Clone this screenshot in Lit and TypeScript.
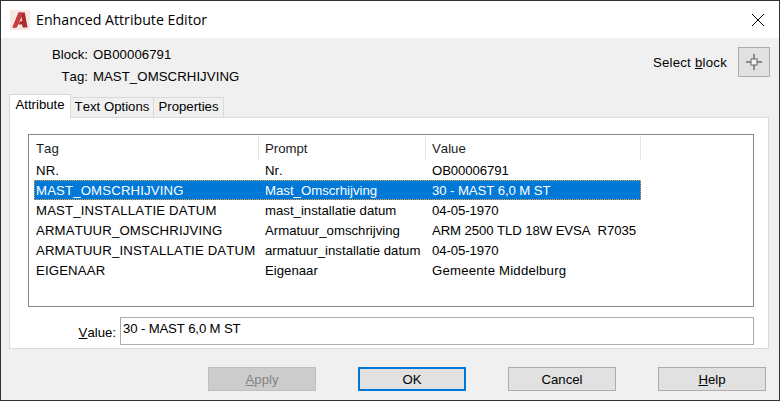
import { LitElement, html, css } from "lit";
import { customElement } from "lit/decorators.js";

const ROWS = [
  ["NR.", "Nr.", "OB00006791"],
  ["MAST_OMSCRHIJVING", "Mast_Omscrhijving", "30 - MAST 6,0 M ST"],
  ["MAST_INSTALLATIE DATUM", "mast_installatie datum", "04-05-1970"],
  ["ARMATUUR_OMSCHRIJVING", "Armatuur_omschrijving", "ARM 2500 TLD 18W EVSA\u00a0 R7035"],
  ["ARMATUUR_INSTALLATIE DATUM", "armatuur_installatie datum", "04-05-1970"],
  ["EIGENAAR", "Eigenaar", "Gemeente Middelburg"],
];

@customElement("app-root")
export class AppRoot extends LitElement {
  static styles = css`
    :host {
      display: block;
      width: 780px;
      height: 401px;
      font-family: "Liberation Sans", Arial, sans-serif;
      font-size: 13.2px;
      font-kerning: none;
      color: #000;
    }
    * { box-sizing: border-box; }
    .win {
      width: 780px;
      height: 401px;
      border: 1px solid #333;
      background: #f0f0f0;
      display: flex;
      flex-direction: column;
      overflow: hidden;
    }
    .title {
      height: 37px;
      flex: none;
      background: #fff;
      display: flex;
      align-items: center;
      padding: 0 14px 0 9px;
    }
    .title svg.logo { width: 20px; height: 20px; flex: none; }
    .title span {
      margin-left: 6px;
      font-family: "Open Sans", "Noto Sans", sans-serif;
      font-kerning: normal;
      font-size: 14.2px;
      flex: 1;
    }
    .title svg.close { width: 14px; height: 14px; }
    .top {
      height: 56px;
      flex: none;
      display: grid;
      grid-template-columns: 1fr auto 32px;
      column-gap: 11px;
      padding: 5px 9px 0 51px;
    }
    .info { display: grid; grid-template-columns: auto auto; justify-content: start; align-content: start; column-gap: 5px; grid-auto-rows: 22px; align-items: center; }
    .info .k { text-align: right; }
    .info .v { letter-spacing: 0.08px; }
    .sel { padding-top: 12px; letter-spacing: 0.25px; }
    .pick {
      width: 32px;
      height: 30px;
      margin-top: 4px;
      background: #e1e1e1;
      border: 1px solid #adadad;
      display: flex;
      align-items: center;
      justify-content: center;
    }
    u { text-underline-offset: 1px; }
    .tabs { display: flex; align-items: flex-end; padding-left: 8px; height: 24px; flex: none; position: relative; z-index: 1; }
    .tab {
      height: 21px;
      background: #f0f0f0;
      border: 1px solid #d9d9d9;
      border-left: none;
      border-bottom: 1px solid #d9d9d9;
      display: flex;
      align-items: center;
      justify-content: center;
      padding-bottom: 2px;
    }
    .tab.a {
      width: 62px;
      height: 24px;
      background: #fff;
      border-left: 1px solid #d9d9d9;
      border-bottom: none;
      padding-bottom: 5px;
    }
    .tab.b { width: 83px; }
    .tab.c { width: 70px; }
    .page {
      width: 760px;
      height: 232px;
      margin-left: 8px;
      margin-top: -1px;
      background: #fff;
      border: 1px solid #d9d9d9;
      padding: 16px 14px 0 18px;
      flex: none;
    }
    .list {
      height: 173px;
      border: 1px solid #828790;
      padding: 1px 5px;
    }
    .cols { display: grid; grid-template-columns: 225px 167px 215px; width: 607px; }
    .head { height: 24px; }
    .head div {
      padding: 5px 0 0 2px;
      border-right: 1px solid #e5e5e5;
      height: 24px;
      color: #1a1a1a;
    }
    .head div:not(:first-child) { padding-left: 6px; }
    .row { height: 20px; align-items: center; white-space: nowrap; }
    .row div { padding-left: 2px; }
    .row div:nth-child(1) { letter-spacing: 0.15px; }
    .row div:nth-child(2) { padding-left: 6px; }
    .row div:nth-child(3) { padding-left: 6px; letter-spacing: -0.1px; }
    .row:last-child div:nth-child(3) { letter-spacing: 0.2px; }
    .row.on { background: #0078d7; color: #fff; outline: 1px dotted #e8a040; outline-offset: -1px; }
    .val { display: flex; align-items: center; margin-top: 10px; }
    .val label { width: 88px; text-align: right; padding-top: 3px; flex: none; }
    .val .in {
      margin-left: 4px;
      width: 634px;
      height: 28px;
      border: 1px solid #adadad;
      background: #fff;
      padding: 3px 2px;
      letter-spacing: -0.15px;
    }
    .btns {
      display: flex;
      gap: 42px;
      justify-content: flex-end;
      padding: 18px 13px 0 0;
    }
    .btn {
      width: 108px;
      height: 24px;
      background: #e1e1e1;
      border: 1px solid #adadad;
      display: flex;
      align-items: center;
      justify-content: center;
      padding-top: 1px;
    }
    .btn.dis { background: #cccccc; border-color: #bfbfbf; color: #838383; }
    .btn.def { border: 2px solid #0078d7; }
  `;

  render() {
    return html`<div class="win">
      <div class="title">
        <svg class="logo" viewBox="0 0 20 20">
          <rect width="20" height="20" fill="#f7e8e4"></rect>
          <path d="M2.5 17.5 8.6 2.5h6.2l2.7 15h-4.9l-.5-3H8.4l1.6-3.3h2.2l-.7-4.4-4.9 10.7z" fill="#a92a30"></path>
          <path d="M8.6 2.5 2.5 17.5h4.1L11.5 6.8l.5-4.3z" fill="#c93a3c"></path>
        </svg>
        <span>Enhanced Attribute Editor</span>
        <svg class="close" viewBox="0 0 14 14"><path d="M1 1l12 12M13 1 1 13" stroke="#000" stroke-width="1" fill="none"></path></svg>
      </div>
      <div class="top">
        <div class="info">
          <div class="k">Block:</div><div class="v">OB00006791</div>
          <div class="k">Tag:</div><div class="v">MAST_OMSCRHIJVING</div>
        </div>
        <div class="sel">Select <u>b</u>lock</div>
        <div class="pick">
          <svg width="18" height="18" viewBox="0 0 18 18">
            <path d="M9 1v5M9 12v5M1 9h5M12 9h5" stroke="#6f6f6f" stroke-width="1.5" fill="none"></path>
            <rect x="6" y="6" width="6" height="6" fill="#f4f4f4" stroke="#666"></rect>
          </svg>
        </div>
      </div>
      <div class="tabs">
        <div class="tab a">Attribute</div>
        <div class="tab b">Text Options</div>
        <div class="tab c">Properties</div>
      </div>
      <div class="page">
        <div class="list">
          <div class="cols head"><div>Tag</div><div>Prompt</div><div>Value</div></div>
          ${ROWS.map(
            (r, i) => html`<div class="cols row ${i === 1 ? "on" : ""}">
              <div>${r[0]}</div><div>${r[1]}</div><div>${r[2]}</div>
            </div>`
          )}
        </div>
        <div class="val">
          <label><u>V</u>alue:</label>
          <div class="in">30 - MAST 6,0 M ST</div>
        </div>
      </div>
      <div class="btns">
        <div class="btn dis"><span><u>A</u>pply</span></div>
        <div class="btn def">OK</div>
        <div class="btn">Cancel</div>
        <div class="btn"><span><u>H</u>elp</span></div>
      </div>
    </div>`;
  }
}
